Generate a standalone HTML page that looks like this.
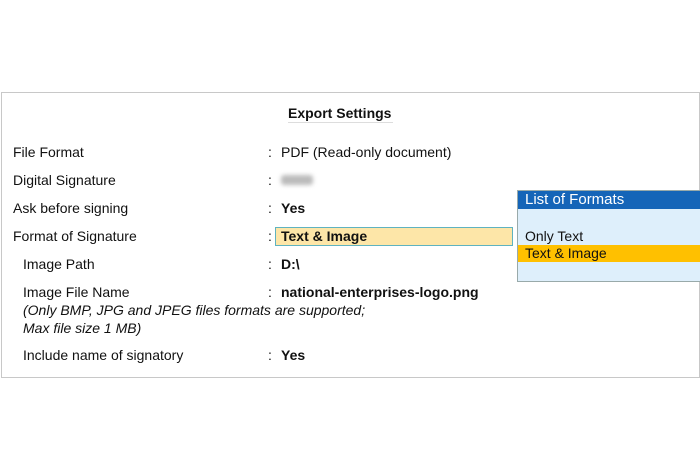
<!DOCTYPE html>
<html><head><style>
body{margin:0;width:700px;height:470px;background:#fff;font-family:"Liberation Sans",Arial,sans-serif;font-size:14px;color:#111;position:relative;overflow:hidden}
.panel{position:absolute;left:1px;top:92px;width:697px;height:284px;border:1px solid #c8c8c8;border-right:1px solid #c8c8c8}
.t{position:absolute;white-space:nowrap}
.b{font-weight:bold}
</style></head><body>
<div class="panel"></div>
<div class="t b" style="left:288px;top:105px">Export Settings</div>
<div style="position:absolute;left:288px;top:122px;width:105px;height:1px;background:#ddd"></div>

<div class="t" style="left:13px;top:144px">File Format</div>
<div class="t" style="left:268px;top:144px">:</div>
<div class="t" style="left:281px;top:144px">PDF (Read-only document)</div>

<div class="t" style="left:13px;top:172px">Digital Signature</div>
<div class="t" style="left:268px;top:172px">:</div>
<div style="position:absolute;left:281px;top:175px;width:32px;height:10px;background:#bbb;filter:blur(2px);border-radius:3px"></div>

<div class="t" style="left:13px;top:200px">Ask before signing</div>
<div class="t" style="left:268px;top:200px">:</div>
<div class="t b" style="left:281px;top:200px">Yes</div>

<div class="t" style="left:13px;top:228px">Format of Signature</div>
<div class="t" style="left:268px;top:228px">:</div>
<div style="position:absolute;left:275px;top:227px;width:236px;height:17px;background:#fde6a8;border:1px solid #5fb3c0"></div>
<div class="t b" style="left:281px;top:228px">Text &amp; Image</div>

<div class="t" style="left:23px;top:256px">Image Path</div>
<div class="t" style="left:268px;top:256px">:</div>
<div class="t b" style="left:281px;top:256px">D:\</div>

<div class="t" style="left:23px;top:284px">Image File Name</div>
<div class="t" style="left:268px;top:284px">:</div>
<div class="t b" style="left:281px;top:284px">national-enterprises-logo.png</div>
<div class="t" style="left:23px;top:302px;font-style:italic">(Only BMP, JPG and JPEG files formats are supported;</div>
<div class="t" style="left:23px;top:320px;font-style:italic">Max file size 1 MB)</div>

<div class="t" style="left:23px;top:347px">Include name of signatory</div>
<div class="t" style="left:268px;top:347px">:</div>
<div class="t b" style="left:281px;top:347px">Yes</div>

<div style="position:absolute;left:517px;top:190px;width:183px;height:90px;background:#deeffb;border:1px solid #9aa;border-right:none"></div>
<div style="position:absolute;left:518px;top:191px;width:182px;height:18px;background:#1565b8"></div>
<div class="t" style="left:525px;top:191px;color:#fff;font-size:15px">List of Formats</div>
<div class="t" style="left:525px;top:228px">Only Text</div>
<div style="position:absolute;left:518px;top:245px;width:182px;height:17px;background:#ffc000"></div>
<div class="t" style="left:525px;top:245px">Text &amp; Image</div>
</body></html>
